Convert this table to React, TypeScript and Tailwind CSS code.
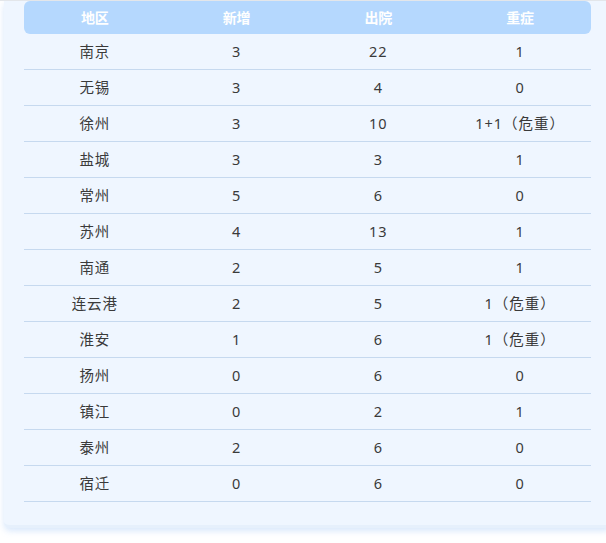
const rows: [string, string, string, string][] = [
  ['南京', '3', '22', '1'],
  ['无锡', '3', '4', '0'],
  ['徐州', '3', '10', '1+1（危重）'],
  ['盐城', '3', '3', '1'],
  ['常州', '5', '6', '0'],
  ['苏州', '4', '13', '1'],
  ['南通', '2', '5', '1'],
  ['连云港', '2', '5', '1（危重）'],
  ['淮安', '1', '6', '1（危重）'],
  ['扬州', '0', '6', '0'],
  ['镇江', '0', '2', '1'],
  ['泰州', '2', '6', '0'],
  ['宿迁', '0', '6', '0'],
];

const headers = ['地区', '新增', '出院', '重症'];

export default function App() {
  return (
    <div
      className="h-[543px] w-[606px] overflow-hidden bg-white border-t border-[#e3e6ea]"
      style={{ fontFamily: '"Noto Sans", "Noto Sans CJK SC", sans-serif' }}
    >
      <div className="ml-[4px] w-[606px] h-[527px] rounded-bl-md bg-[#eff6ff] border-b-[3px] border-[#e6f0fc] shadow-[0_3px_6px_rgba(147,190,245,0.35)]">
        <div className="ml-[20px] w-[567px]">
          <div className="grid grid-cols-4 h-[33px] items-center rounded-[6px] bg-[#b5d8fe]">
            {headers.map((h) => (
              <div key={h} className="text-center text-[14px] font-bold text-white">
                {h}
              </div>
            ))}
          </div>
          {rows.map((r) => (
            <div key={r[0]} className="grid grid-cols-4 h-[36px] items-center border-b border-[#c6d9ef] text-[14.5px] text-[#3a3a3a]">
              {r.map((c, i) => (
                <div key={i} className="text-center tracking-[1px]">
                  {c}
                </div>
              ))}
            </div>
          ))}
        </div>
      </div>
    </div>
  );
}
